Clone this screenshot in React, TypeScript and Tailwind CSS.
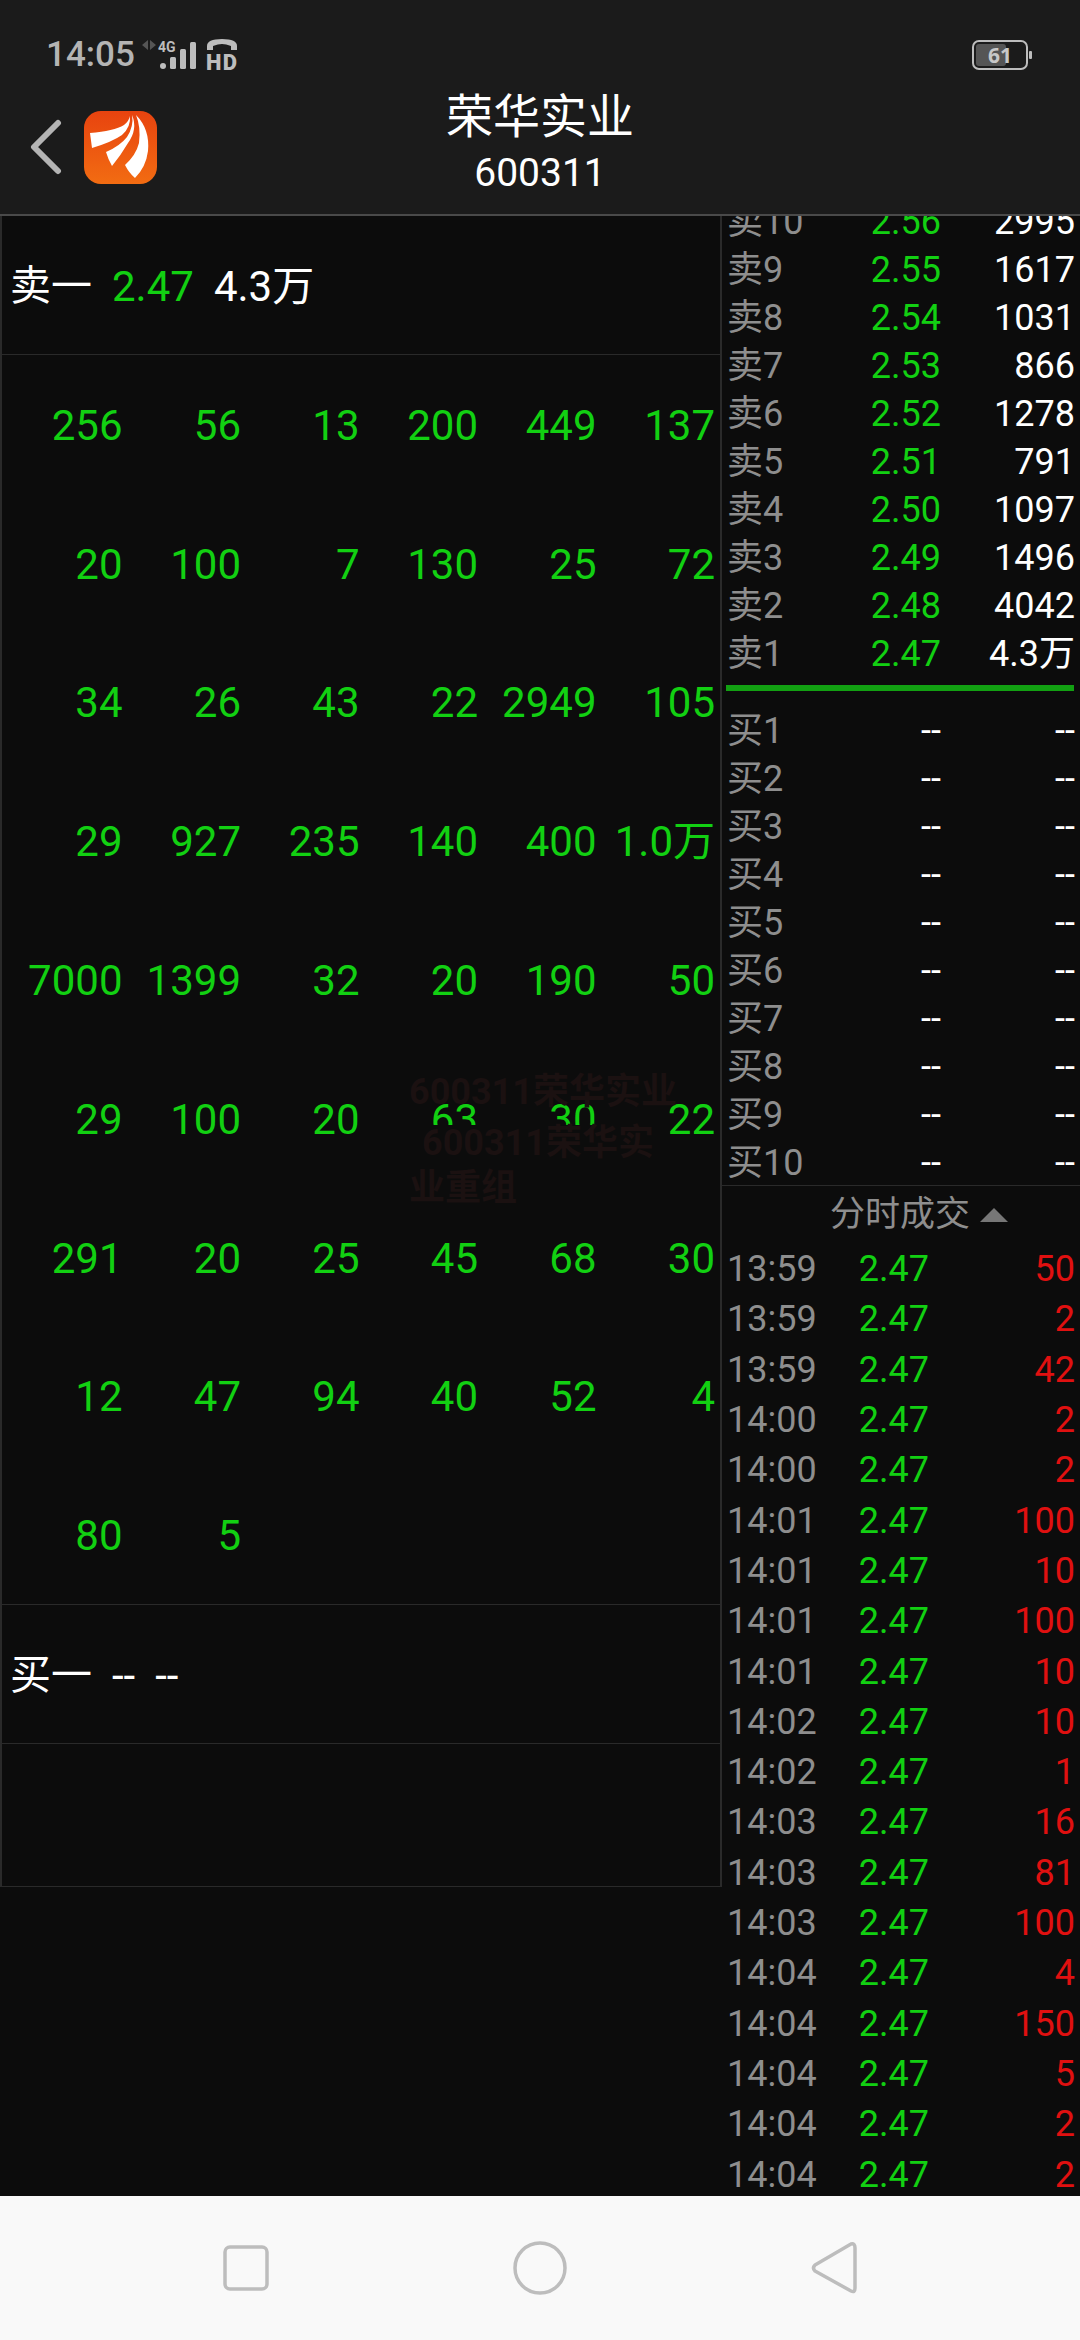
import { ReactNode } from "react";

const font = "font-['Roboto','Noto_Sans_CJK_SC',sans-serif]";

const volumes = [
  ["256", "56", "13", "200", "449", "137"],
  ["20", "100", "7", "130", "25", "72"],
  ["34", "26", "43", "22", "2949", "105"],
  ["29", "927", "235", "140", "400", "1.0万"],
  ["7000", "1399", "32", "20", "190", "50"],
  ["29", "100", "20", "63", "30", "22"],
  ["291", "20", "25", "45", "68", "30"],
  ["12", "47", "94", "40", "52", "4"],
  ["80", "5"],
];

const asks = [
  ["卖10", "2.56", "2995"],
  ["卖9", "2.55", "1617"],
  ["卖8", "2.54", "1031"],
  ["卖7", "2.53", "866"],
  ["卖6", "2.52", "1278"],
  ["卖5", "2.51", "791"],
  ["卖4", "2.50", "1097"],
  ["卖3", "2.49", "1496"],
  ["卖2", "2.48", "4042"],
  ["卖1", "2.47", "4.3万"],
];

const bids = ["买1", "买2", "买3", "买4", "买5", "买6", "买7", "买8", "买9", "买10"];

const ticks = [
  ["13:59", "50"],
  ["13:59", "2"],
  ["13:59", "42"],
  ["14:00", "2"],
  ["14:00", "2"],
  ["14:01", "100"],
  ["14:01", "10"],
  ["14:01", "100"],
  ["14:01", "10"],
  ["14:02", "10"],
  ["14:02", "1"],
  ["14:03", "16"],
  ["14:03", "81"],
  ["14:03", "100"],
  ["14:04", "4"],
  ["14:04", "150"],
  ["14:04", "5"],
  ["14:04", "2"],
  ["14:04", "2"],
];

function StatusIcons() {
  return (
    <svg width="100" height="40" viewBox="0 0 100 40" className="ml-[5px]">
      <path d="M8 5 L2 10 L8 15 Z M10 15 L16 10 L10 5 Z" fill="#555" />
      <text x="18" y="17" fontFamily="Roboto" fontWeight="700" fontSize="14" fill="#bdbdbd">
        4G
      </text>
      <circle cx="23" cy="31" r="3" fill="#bdbdbd" />
      <rect x="30" y="22" width="6" height="12" rx="1.5" fill="#bdbdbd" />
      <rect x="40" y="14" width="6" height="20" rx="1.5" fill="#bdbdbd" />
      <rect x="50" y="7" width="6" height="27" rx="1.5" fill="#bdbdbd" />
      <path
        d="M67 15 V11 Q67 4 82 4 Q97 4 97 11 V15 H91 V11 Q86 9 82 9 Q78 9 73 11 V15 Z"
        fill="#bdbdbd"
      />
      <text x="66" y="35" fontFamily="Roboto" fontWeight="900" fontSize="22" fill="#bdbdbd" textLength="31">
        HD
      </text>
    </svg>
  );
}

function Battery() {
  return (
    <svg width="60" height="30" viewBox="0 0 60 30">
      <rect x="1" y="1" width="54" height="28" rx="6" fill="none" stroke="#bdbdbd" strokeWidth="2" />
      <rect x="4" y="4" width="30" height="22" rx="3" fill="#555" />
      <rect x="57" y="11" width="3" height="8" rx="1" fill="#bdbdbd" />
      <text x="28" y="23" textAnchor="middle" fontFamily="Open Sans" fontWeight="700" fontSize="21" fill="#c8c8c8">
        61
      </text>
    </svg>
  );
}

function Logo() {
  return (
    <svg width="73" height="73" viewBox="0 0 73 73">
      <defs>
        <linearGradient id="logoFill" x1="0" y1="0" x2="0" y2="1">
          <stop offset="0" stopColor="#e8430f" />
          <stop offset="1" stopColor="#f26c12" />
        </linearGradient>
      </defs>
      <rect width="73" height="73" rx="17" fill="url(#logoFill)" />
      <path d="M6 22 Q30 20 40 14 Q45 10 46 5 Q47 16 38 24 Q28 31 8 37 Z" fill="#fff" />
      <path d="M48 4 Q54 18 44 32 Q37 44 28 55 Q24 48 22 41 Q36 35 43 26 Q50 15 48 4 Z" fill="#fff" />
      <path d="M52 4 Q66 18 64 40 Q62 56 51 67 Q45 62 41 54 Q52 44 55 32 Q57 16 52 4 Z" fill="#fff" />
    </svg>
  );
}

function Header() {
  return (
    <div className="h-[214px] bg-[#1b1b1b] flex flex-col">
      <div className="h-[80px] flex items-center justify-between pl-[46px] pr-[48px] pt-[30px]">
        <div className="flex items-center">
          <span className="text-[35px] font-medium text-[#b4b4b4]">14:05</span>
          <StatusIcons />
        </div>
        <Battery />
      </div>
      <div className="h-[134px] grid grid-cols-[1fr_auto_1fr] items-center">
        <div className="flex items-center pl-[30px] gap-[22px]">
          <svg width="32" height="56" viewBox="0 0 32 56">
            <path
              d="M28 4 L4 28 L28 52"
              fill="none"
              stroke="#b4b4b4"
              strokeWidth="6"
              strokeLinecap="round"
              strokeLinejoin="round"
            />
          </svg>
          <Logo />
        </div>
        <div className="flex flex-col items-center pb-[9px] text-white">
          <span className="text-[47px] leading-[60px]">荣华实业</span>
          <span className="text-[39px] leading-[52px]">600311</span>
        </div>
        <div />
      </div>
    </div>
  );
}

function QuoteRow({ children }: { children: ReactNode }) {
  return (
    <div className="h-[139px] flex items-center gap-[20px] pl-[8px] pt-[3px] text-[42px] border-b border-[#2a2a2a]">
      {children}
    </div>
  );
}

function LeftPanel() {
  return (
    <div className="w-[722px] h-[1671px] border-x-2 border-b border-[#2a2a2a]">
      <QuoteRow>
        <span className="text-white text-[41px]">卖一</span>
        <span className="text-[#12d012]">2.47</span>
        <span className="text-white">4.3万</span>
      </QuoteRow>
      <div className="grid grid-cols-6 pl-[2px] pr-[5px] border-b border-[#2a2a2a]">
        {volumes.flat().map((v, i) => (
          <div key={i} className="h-[138.8px] flex items-center justify-end pt-[2px] text-[42px] text-[#12d012]">
            {v}
          </div>
        ))}
      </div>
      <QuoteRow>
        <span className="text-white text-[41px]">买一</span>
        <span className="text-white">--</span>
        <span className="text-white">--</span>
      </QuoteRow>
    </div>
  );
}

function DepthRow({ label, price, qty, priceClass }: { label: string; price: string; qty: string; priceClass: string }) {
  return (
    <div className="h-[48px] flex items-center pl-[5px] pr-[5px] text-[36px]">
      <span className="w-[130px] text-[#8e8e8e]">{label}</span>
      <span className={`w-[84px] text-right ${priceClass}`}>{price}</span>
      <span className="flex-1 text-right text-white">{qty}</span>
    </div>
  );
}

function RightPanel() {
  return (
    <div className="flex-1 h-full overflow-hidden">
      <div className="-mt-[18px]">
        {asks.map(([label, price, qty]) => (
          <DepthRow key={label} label={label} price={price} qty={qty} priceClass="text-[#12d012]" />
        ))}
      </div>
      <div className="h-[6px] bg-[#12a012] mt-[7px] ml-[4px] mr-[6px]" />
      <div className="mt-[16px] h-[479px] border-b border-[#2a2a2a]">
        {bids.map((label) => (
          <DepthRow key={label} label={label} price="--" qty="--" priceClass="text-white" />
        ))}
      </div>
      <div className="h-[58px] flex items-center justify-center gap-[10px] pl-[36px] text-[35px] text-[#8e8e8e]">
        <span>分时成交</span>
        <svg width="28" height="14" viewBox="0 0 28 14">
          <path d="M14 0 L28 14 H0 Z" fill="#777" />
        </svg>
      </div>
      {ticks.map(([time, qty], i) => (
        <div key={i} className="h-[50.3px] flex items-center pl-[5px] pr-[5px] text-[36px]">
          <span className="w-[118px] text-[#8e8e8e]">{time}</span>
          <span className="w-[84px] text-right text-[#12d012]">2.47</span>
          <span className="flex-1 text-right text-[#e01010]">{qty}</span>
        </div>
      ))}
    </div>
  );
}

function Watermark() {
  return (
    <div className="absolute left-[409px] top-[852px] flex flex-col items-start text-[36px] font-bold text-[#1b1111] whitespace-nowrap">
      <span className="leading-[48px]">600311荣华实业</span>
      <span className="ml-[3px] mt-[9px] pl-[10px] pr-[2px] leading-[36px] bg-[#0c0c0c]">600311荣华实</span>
      <span className="mt-[3px] leading-[48px]">业重组</span>
    </div>
  );
}

function NavBar() {
  return (
    <div className="h-[144px] bg-[#f9f9f9] flex justify-center items-center">
      <div className="w-[294px] flex justify-center">
        <svg width="46" height="46" viewBox="0 0 46 46">
          <rect x="2" y="2" width="42" height="42" rx="5" fill="none" stroke="#bdbdbd" strokeWidth="3.5" />
        </svg>
      </div>
      <div className="w-[294px] flex justify-center">
        <svg width="54" height="54" viewBox="0 0 54 54">
          <circle cx="27" cy="27" r="25" fill="none" stroke="#bdbdbd" strokeWidth="3.5" />
        </svg>
      </div>
      <div className="w-[294px] flex justify-center">
        <svg width="46" height="54" viewBox="0 0 46 54">
          <path
            d="M40 3 Q44 2 44 7 V47 Q44 52 40 50 L4 30 Q1 27 4 24 Z"
            fill="none"
            stroke="#bdbdbd"
            strokeWidth="3.5"
            strokeLinejoin="round"
          />
        </svg>
      </div>
    </div>
  );
}

export default function App() {
  return (
    <div className={`w-[1080px] h-[2340px] flex flex-col overflow-hidden bg-[#0c0c0c] ${font}`}>
      <Header />
      <div className="h-[2px] bg-[#4a4a4a]" />
      <div className="relative h-[1980px] flex overflow-hidden">
        <LeftPanel />
        <RightPanel />
        <Watermark />
      </div>
      <NavBar />
    </div>
  );
}
